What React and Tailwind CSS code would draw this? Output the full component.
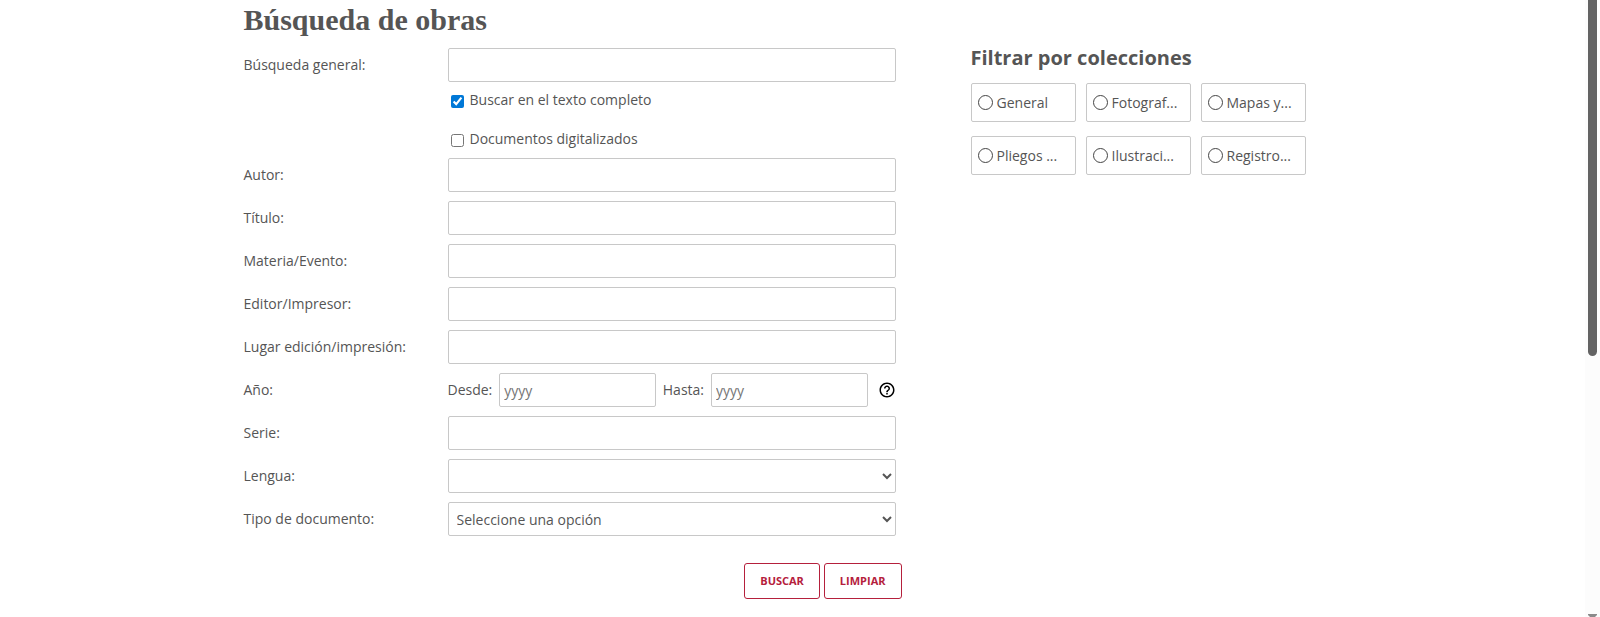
import { useState } from "react";

const collections = [
  "General",
  "Fotograf...",
  "Mapas y...",
  "Pliegos ...",
  "Ilustraci...",
  "Registro...",
];

const inputClass =
  "h-[34px] w-full min-w-0 rounded-xs border border-[#c8c8c8] bg-white px-1 focus:border-[#b5203c] focus:outline-none";

const buttonClass =
  "h-9 rounded-[3px] border border-[#b5203c] px-[15px] text-[11px] font-bold text-[#b5203c] hover:bg-[#b5203c] hover:text-white";

function Row({ label, htmlFor, children }) {
  return (
    <div className="flex items-center">
      <label htmlFor={htmlFor} className="w-[204px] shrink-0">
        {label}
      </label>
      <div className="min-w-0 flex-1">{children}</div>
    </div>
  );
}

function TextRow({ label, name }) {
  return (
    <Row label={label} htmlFor={name}>
      <input id={name} name={name} type="text" className={inputClass} />
    </Row>
  );
}

function HelpIcon() {
  return (
    <svg viewBox="0 0 24 24" className="size-[18px]" fill="currentColor" aria-hidden="true">
      <path d="M11 18h2v-2h-2v2zm1-16C6.48 2 2 6.48 2 12s4.48 10 10 10 10-4.48 10-10S17.52 2 12 2zm0 18c-4.41 0-8-3.59-8-8s3.59-8 8-8 8 3.59 8 8-3.59 8-8 8zm0-14c-2.21 0-4 1.79-4 4h2c0-1.1.9-2 2-2s2 .9 2 2c0 2-3 1.75-3 5h2c0-2.25 3-2.5 3-5 0-2.21-1.79-4-4-4z" />
    </svg>
  );
}

export default function App() {
  const [fullText, setFullText] = useState(true);
  const [digitized, setDigitized] = useState(false);
  const [collection, setCollection] = useState("");

  return (
    <div className="flex h-screen overflow-hidden bg-white font-['Open_Sans','Noto_Sans',sans-serif] text-sm text-[#555555]">
      <main className="min-w-0 flex-1">
        <div className="mx-auto flex max-w-[1098px] flex-wrap gap-x-[69px]">
          <form className="w-[658px] max-w-full" onSubmit={(e) => e.preventDefault()}>
            <h1 className="mb-2 font-['Liberation_Serif',serif] text-[30px] leading-[40px] font-bold">
              Búsqueda de obras
            </h1>

            <div className="flex flex-col gap-[9px] pr-[6px]">
              <TextRow label="Búsqueda general:" name="general" />

              {/* Search options */}
              <div className="-mt-px ml-[204px] flex flex-col gap-[19px] pl-[3px]">
                <label className="flex h-5 items-center gap-[6px]">
                  <input
                    type="checkbox"
                    checked={fullText}
                    onChange={(e) => setFullText(e.target.checked)}
                    className="mt-[3px] size-[13px] accent-[#0078d7]"
                  />
                  Buscar en el texto completo
                </label>
                <label className="flex h-5 items-center gap-[6px]">
                  <input
                    type="checkbox"
                    checked={digitized}
                    onChange={(e) => setDigitized(e.target.checked)}
                    className="mt-[3px] size-[13px] accent-[#0078d7]"
                  />
                  Documentos digitalizados
                </label>
              </div>

              <TextRow label="Autor:" name="autor" />
              <TextRow label="Título:" name="titulo" />
              <TextRow label="Materia/Evento:" name="materia" />
              <TextRow label="Editor/Impresor:" name="editor" />
              <TextRow label="Lugar edición/impresión:" name="lugar" />

              {/* Year range */}
              <Row label="Año:" htmlFor="desde">
                <div className="flex items-center gap-[7px]">
                  <label htmlFor="desde">Desde:</label>
                  <input id="desde" type="text" placeholder="yyyy" className={`${inputClass} placeholder:text-[#757575]`} />
                  <label htmlFor="hasta">Hasta:</label>
                  <input id="hasta" type="text" placeholder="yyyy" className={`${inputClass} placeholder:text-[#757575]`} />
                  <button type="button" aria-label="Ayuda" className="ml-[3px] shrink-0 text-black">
                    <HelpIcon />
                  </button>
                </div>
              </Row>

              <TextRow label="Serie:" name="serie" />

              <Row label="Lengua:" htmlFor="lengua">
                <select id="lengua" className={inputClass}>
                  <option value=""></option>
                </select>
              </Row>
              <Row label="Tipo de documento:" htmlFor="tipo">
                <select id="tipo" className={inputClass}>
                  <option value="">Seleccione una opción</option>
                </select>
              </Row>
            </div>

            <div className="mt-[27px] flex justify-end gap-1">
              <button type="submit" className={buttonClass}>
                BUSCAR
              </button>
              <button type="reset" className={buttonClass}>
                LIMPIAR
              </button>
            </div>
          </form>

          {/* Collections */}
          <section className="w-[335px] pt-[44px]">
            <h2 className="mb-[11px] text-xl leading-7 font-bold">Filtrar por colecciones</h2>
            <div className="grid grid-cols-3 gap-x-[10px] gap-y-[14px]">
              {collections.map((name) => (
                <label
                  key={name}
                  className="flex h-[39px] items-center gap-1 rounded-xs border border-[#c8c8c8] px-[6px] whitespace-nowrap"
                >
                  <input
                    type="radio"
                    name="coleccion"
                    checked={collection === name}
                    onChange={() => setCollection(name)}
                    className="size-[15px] shrink-0 appearance-none rounded-full border border-[#444444] checked:bg-[#555555]"
                  />
                  {name}
                </label>
              ))}
            </div>
          </section>
        </div>
      </main>

      {/* Scroll track */}
      <div className="flex w-[15px] shrink-0 flex-col items-center justify-between bg-[#fcfcfc]" aria-hidden="true">
        <div className="h-89 w-[9px] rounded-b-full bg-[#636363]"></div>
        <svg width="9" height="3" viewBox="0 0 9 3">
          <path d="M0 0h9v1L7 3H2L0 1z" fill="#8a8a8a" />
        </svg>
      </div>
    </div>
  );
}
